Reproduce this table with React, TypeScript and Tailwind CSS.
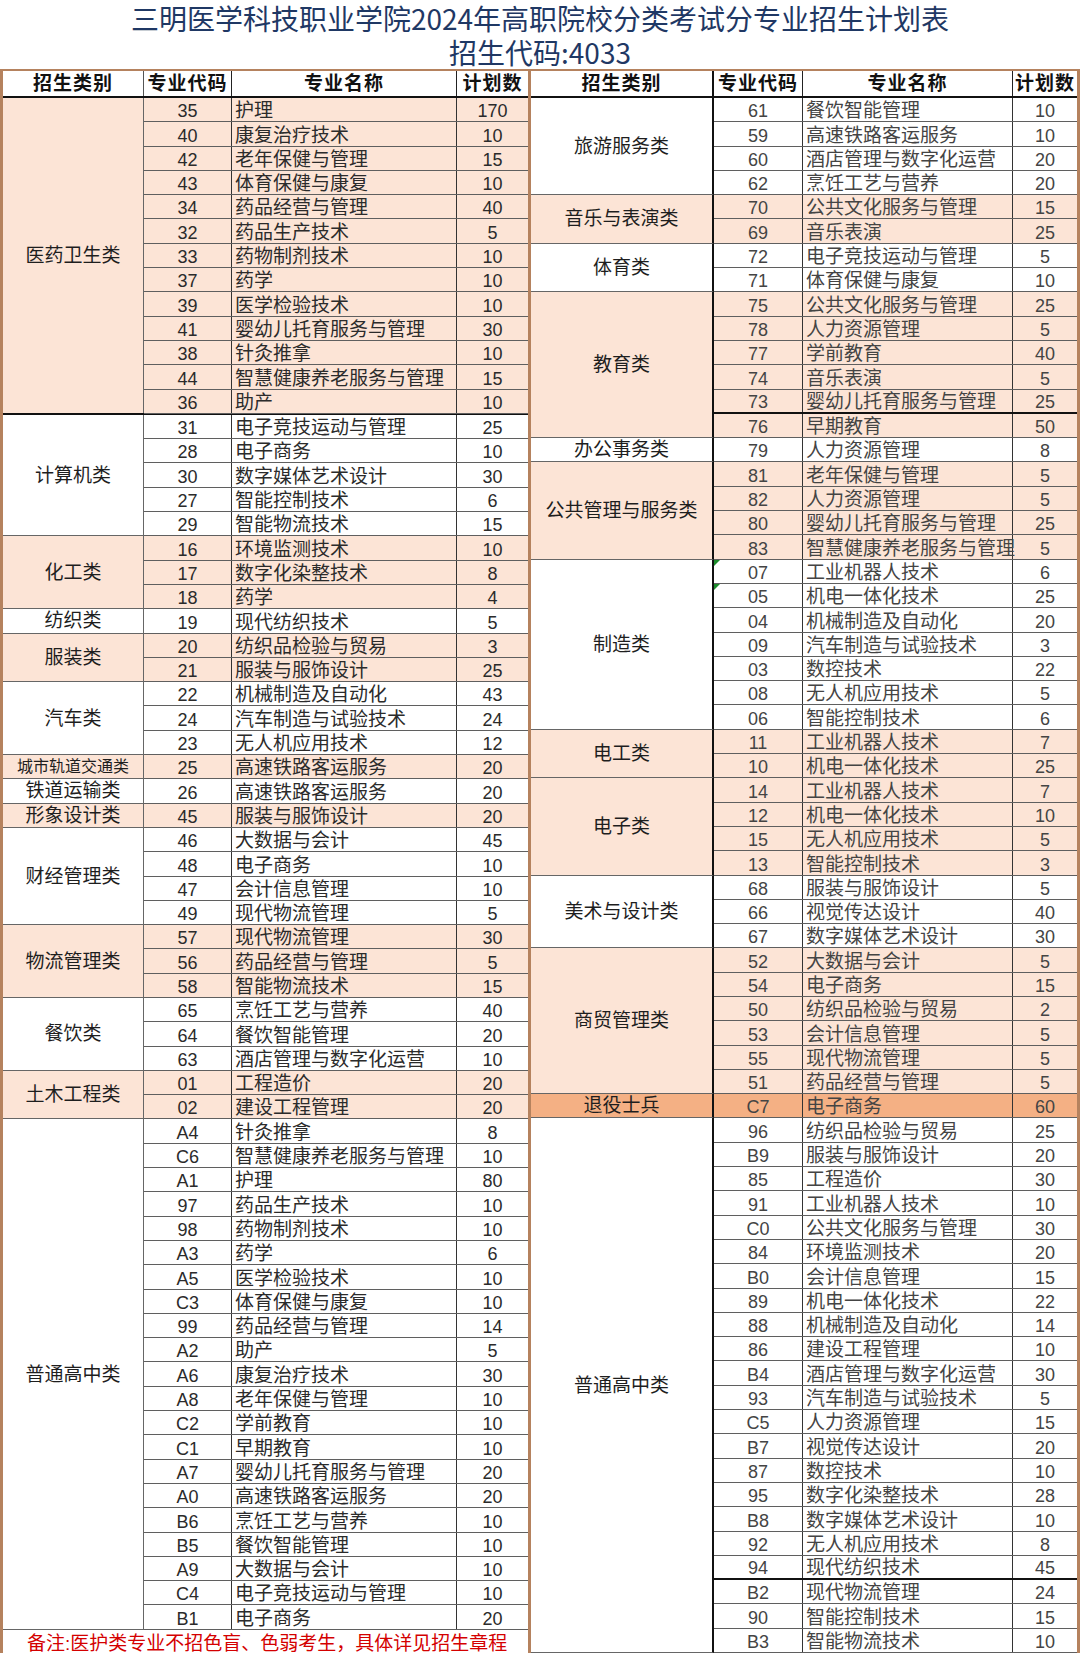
type Row = [string, string, string]
type Group = {
  cat: string
  fill?: 'peach' | 'orange'
  small?: boolean
  thickTop?: boolean
  rows: Row[]
  thickRows?: number[]
  marks?: number[]
}

const left: Group[] = [
  {
    cat: '医药卫生类',
    fill: 'peach',
    rows: [
      ['35', '护理', '170'],
      ['40', '康复治疗技术', '10'],
      ['42', '老年保健与管理', '15'],
      ['43', '体育保健与康复', '10'],
      ['34', '药品经营与管理', '40'],
      ['32', '药品生产技术', '5'],
      ['33', '药物制剂技术', '10'],
      ['37', '药学', '10'],
      ['39', '医学检验技术', '10'],
      ['41', '婴幼儿托育服务与管理', '30'],
      ['38', '针灸推拿', '10'],
      ['44', '智慧健康养老服务与管理', '15'],
      ['36', '助产', '10'],
    ],
  },
  {
    cat: '计算机类',
    thickTop: true,
    rows: [
      ['31', '电子竞技运动与管理', '25'],
      ['28', '电子商务', '10'],
      ['30', '数字媒体艺术设计', '30'],
      ['27', '智能控制技术', '6'],
      ['29', '智能物流技术', '15'],
    ],
  },
  {
    cat: '化工类',
    fill: 'peach',
    rows: [
      ['16', '环境监测技术', '10'],
      ['17', '数字化染整技术', '8'],
      ['18', '药学', '4'],
    ],
  },
  { cat: '纺织类', rows: [['19', '现代纺织技术', '5']] },
  {
    cat: '服装类',
    fill: 'peach',
    rows: [
      ['20', '纺织品检验与贸易', '3'],
      ['21', '服装与服饰设计', '25'],
    ],
  },
  {
    cat: '汽车类',
    rows: [
      ['22', '机械制造及自动化', '43'],
      ['24', '汽车制造与试验技术', '24'],
      ['23', '无人机应用技术', '12'],
    ],
  },
  { cat: '城市轨道交通类', fill: 'peach', small: true, rows: [['25', '高速铁路客运服务', '20']] },
  { cat: '铁道运输类', rows: [['26', '高速铁路客运服务', '20']] },
  { cat: '形象设计类', fill: 'peach', rows: [['45', '服装与服饰设计', '20']] },
  {
    cat: '财经管理类',
    rows: [
      ['46', '大数据与会计', '45'],
      ['48', '电子商务', '10'],
      ['47', '会计信息管理', '10'],
      ['49', '现代物流管理', '5'],
    ],
  },
  {
    cat: '物流管理类',
    fill: 'peach',
    rows: [
      ['57', '现代物流管理', '30'],
      ['56', '药品经营与管理', '5'],
      ['58', '智能物流技术', '15'],
    ],
  },
  {
    cat: '餐饮类',
    rows: [
      ['65', '烹饪工艺与营养', '40'],
      ['64', '餐饮智能管理', '20'],
      ['63', '酒店管理与数字化运营', '10'],
    ],
  },
  {
    cat: '土木工程类',
    fill: 'peach',
    rows: [
      ['01', '工程造价', '20'],
      ['02', '建设工程管理', '20'],
    ],
  },
  {
    cat: '普通高中类',
    rows: [
      ['A4', '针灸推拿', '8'],
      ['C6', '智慧健康养老服务与管理', '10'],
      ['A1', '护理', '80'],
      ['97', '药品生产技术', '10'],
      ['98', '药物制剂技术', '10'],
      ['A3', '药学', '6'],
      ['A5', '医学检验技术', '10'],
      ['C3', '体育保健与康复', '10'],
      ['99', '药品经营与管理', '14'],
      ['A2', '助产', '5'],
      ['A6', '康复治疗技术', '30'],
      ['A8', '老年保健与管理', '10'],
      ['C2', '学前教育', '10'],
      ['C1', '早期教育', '10'],
      ['A7', '婴幼儿托育服务与管理', '20'],
      ['A0', '高速铁路客运服务', '20'],
      ['B6', '烹饪工艺与营养', '10'],
      ['B5', '餐饮智能管理', '10'],
      ['A9', '大数据与会计', '10'],
      ['C4', '电子竞技运动与管理', '10'],
      ['B1', '电子商务', '20'],
    ],
  },
]

const right: Group[] = [
  {
    cat: '旅游服务类',
    rows: [
      ['61', '餐饮智能管理', '10'],
      ['59', '高速铁路客运服务', '10'],
      ['60', '酒店管理与数字化运营', '20'],
      ['62', '烹饪工艺与营养', '20'],
    ],
  },
  {
    cat: '音乐与表演类',
    fill: 'peach',
    rows: [
      ['70', '公共文化服务与管理', '15'],
      ['69', '音乐表演', '25'],
    ],
  },
  {
    cat: '体育类',
    rows: [
      ['72', '电子竞技运动与管理', '5'],
      ['71', '体育保健与康复', '10'],
    ],
  },
  {
    cat: '教育类',
    fill: 'peach',
    thickRows: [5],
    rows: [
      ['75', '公共文化服务与管理', '25'],
      ['78', '人力资源管理', '5'],
      ['77', '学前教育', '40'],
      ['74', '音乐表演', '5'],
      ['73', '婴幼儿托育服务与管理', '25'],
      ['76', '早期教育', '50'],
    ],
  },
  { cat: '办公事务类', rows: [['79', '人力资源管理', '8']] },
  {
    cat: '公共管理与服务类',
    fill: 'peach',
    rows: [
      ['81', '老年保健与管理', '5'],
      ['82', '人力资源管理', '5'],
      ['80', '婴幼儿托育服务与管理', '25'],
      ['83', '智慧健康养老服务与管理', '5'],
    ],
  },
  {
    cat: '制造类',
    marks: [0, 1],
    rows: [
      ['07', '工业机器人技术', '6'],
      ['05', '机电一体化技术', '25'],
      ['04', '机械制造及自动化', '20'],
      ['09', '汽车制造与试验技术', '3'],
      ['03', '数控技术', '22'],
      ['08', '无人机应用技术', '5'],
      ['06', '智能控制技术', '6'],
    ],
  },
  {
    cat: '电工类',
    fill: 'peach',
    rows: [
      ['11', '工业机器人技术', '7'],
      ['10', '机电一体化技术', '25'],
    ],
  },
  {
    cat: '电子类',
    fill: 'peach',
    rows: [
      ['14', '工业机器人技术', '7'],
      ['12', '机电一体化技术', '10'],
      ['15', '无人机应用技术', '5'],
      ['13', '智能控制技术', '3'],
    ],
  },
  {
    cat: '美术与设计类',
    rows: [
      ['68', '服装与服饰设计', '5'],
      ['66', '视觉传达设计', '40'],
      ['67', '数字媒体艺术设计', '30'],
    ],
  },
  {
    cat: '商贸管理类',
    fill: 'peach',
    rows: [
      ['52', '大数据与会计', '5'],
      ['54', '电子商务', '15'],
      ['50', '纺织品检验与贸易', '2'],
      ['53', '会计信息管理', '5'],
      ['55', '现代物流管理', '5'],
      ['51', '药品经营与管理', '5'],
    ],
  },
  { cat: '退役士兵', fill: 'orange', rows: [['C7', '电子商务', '60']] },
  {
    cat: '普通高中类',
    thickRows: [19],
    rows: [
      ['96', '纺织品检验与贸易', '25'],
      ['B9', '服装与服饰设计', '20'],
      ['85', '工程造价', '30'],
      ['91', '工业机器人技术', '10'],
      ['C0', '公共文化服务与管理', '30'],
      ['84', '环境监测技术', '20'],
      ['B0', '会计信息管理', '15'],
      ['89', '机电一体化技术', '22'],
      ['88', '机械制造及自动化', '14'],
      ['86', '建设工程管理', '10'],
      ['B4', '酒店管理与数字化运营', '30'],
      ['93', '汽车制造与试验技术', '5'],
      ['C5', '人力资源管理', '15'],
      ['B7', '视觉传达设计', '20'],
      ['87', '数控技术', '10'],
      ['95', '数字化染整技术', '28'],
      ['B8', '数字媒体艺术设计', '10'],
      ['92', '无人机应用技术', '8'],
      ['94', '现代纺织技术', '45'],
      ['B2', '现代物流管理', '24'],
      ['90', '智能控制技术', '15'],
      ['B3', '智能物流技术', '10'],
    ],
  },
]

function fillClass(fill?: Group['fill']) {
  if (fill === 'peach') return 'bg-[#fce4d6]'
  if (fill === 'orange') return 'bg-[#f4b084]'
  return 'bg-white'
}

function Header({ side }: { side: 'left' | 'right' }) {
  const w =
    side === 'left'
      ? ['w-[141px] border-r border-[#555]', 'w-[88px] border-r border-[#222]', 'w-[225px] border-r border-[#222]', 'w-[71px]']
      : ['w-[183px] border-r-2 border-[#111]', 'w-[89px] border-r border-[#222]', 'w-[210px] border-r border-[#222]', 'w-[64px]']
  const labels = ['招生类别', '专业代码', '专业名称', '计划数']
  return (
    <div className="flex h-[27px] border-b-2 border-[#111] bg-white">
      {labels.map((l, i) => (
        <div
          key={l}
          className={`${w[i]} flex items-center justify-center text-[19px] font-bold leading-none text-[#111] tracking-[1px]`}
        >
          {l}
        </div>
      ))}
    </div>
  )
}

function Table({ side, groups }: { side: 'left' | 'right'; groups: Group[] }) {
  const isLeft = side === 'left'
  const catW = isLeft ? 'w-[141px] border-r border-[#666]' : 'w-[183px] border-r-2 border-[#111]'
  const codeW = isLeft ? 'w-[88px]' : 'w-[89px]'
  const nameW = isLeft ? 'w-[225px]' : 'w-[210px]'
  const numW = isLeft ? 'w-[71px]' : 'w-[64px]'
  const txt = isLeft ? 'text-[#2b2b2b]' : 'text-[#444]'
  return (
    <div className="flex flex-col">
      <Header side={side} />
      {groups.map((g) => (
        <div
          key={g.cat + g.rows[0][0]}
          className={`flex ${fillClass(g.fill)} ${g.thickTop ? 'border-t-2 border-[#111] -mt-[1px]' : ''}`}
        >
          <div
            className={`${catW} flex shrink-0 items-center justify-center overflow-hidden border-b border-b-[#666] leading-none ${
              g.small ? 'text-[16px]' : 'text-[19px]'
            } text-[#1e1e1e] whitespace-nowrap`}
          >
            {g.cat}
          </div>
          <div className="flex flex-col">
            {g.rows.map((r, i) => (
              <div
                key={r[0]}
                className={`relative flex h-[24.3px] border-b ${
                  g.thickRows?.includes(i + 1) ? 'border-b-2 border-[#111]' : 'border-[#5f5f5f]'
                } text-[19px] leading-none ${txt}`}
              >
                {g.marks?.includes(i) && (
                  <span className="absolute left-0 top-0 h-0 w-0 border-t-[6px] border-r-[6px] border-t-[#1c8c2c] border-r-transparent" />
                )}
                <div className={`${codeW} flex items-end justify-center border-r border-[#333] pb-[1px] text-[18px]`}>{r[0]}</div>
                <div className={`${nameW} flex items-end whitespace-nowrap border-r border-[#333] pb-[1px] pl-[3px]`}>
                  {r[1]}
                </div>
                <div className={`${numW} flex items-end justify-center pb-[1px] text-[18px]`}>{r[2]}</div>
              </div>
            ))}
          </div>
        </div>
      ))}
      {isLeft && (
        <div className="flex h-[24.3px] items-end overflow-hidden whitespace-nowrap bg-white pb-[1px] pl-[24px] text-[19px] leading-none text-[#d40000]">
          备注:医护类专业不招色盲、色弱考生，具体详见招生章程
        </div>
      )}
    </div>
  )
}

export default function App() {
  return (
    <div className="h-[1653px] w-[1080px] overflow-hidden bg-white font-['Liberation_Sans','Noto_Sans_CJK_SC',sans-serif]">
      <div className="flex h-[69px] flex-col items-center font-['Noto_Sans_CJK_SC',sans-serif] text-[#1f3864]">
        <div className="text-[28px] leading-[36px]">三明医学科技职业学院2024年高职院校分类考试分专业招生计划表</div>
        <div className="text-[28px] leading-[33px]">招生代码:4033</div>
      </div>
      <div className="flex border-x-[3px] border-y-2 border-[#b5825e]">
        <div className="w-[525px] shrink-0">
          <Table side="left" groups={left} />
        </div>
        <div className="w-[3px] shrink-0 bg-[#b5825e]" />
        <div className="w-[546px] shrink-0">
          <Table side="right" groups={right} />
        </div>
      </div>
    </div>
  )
}
